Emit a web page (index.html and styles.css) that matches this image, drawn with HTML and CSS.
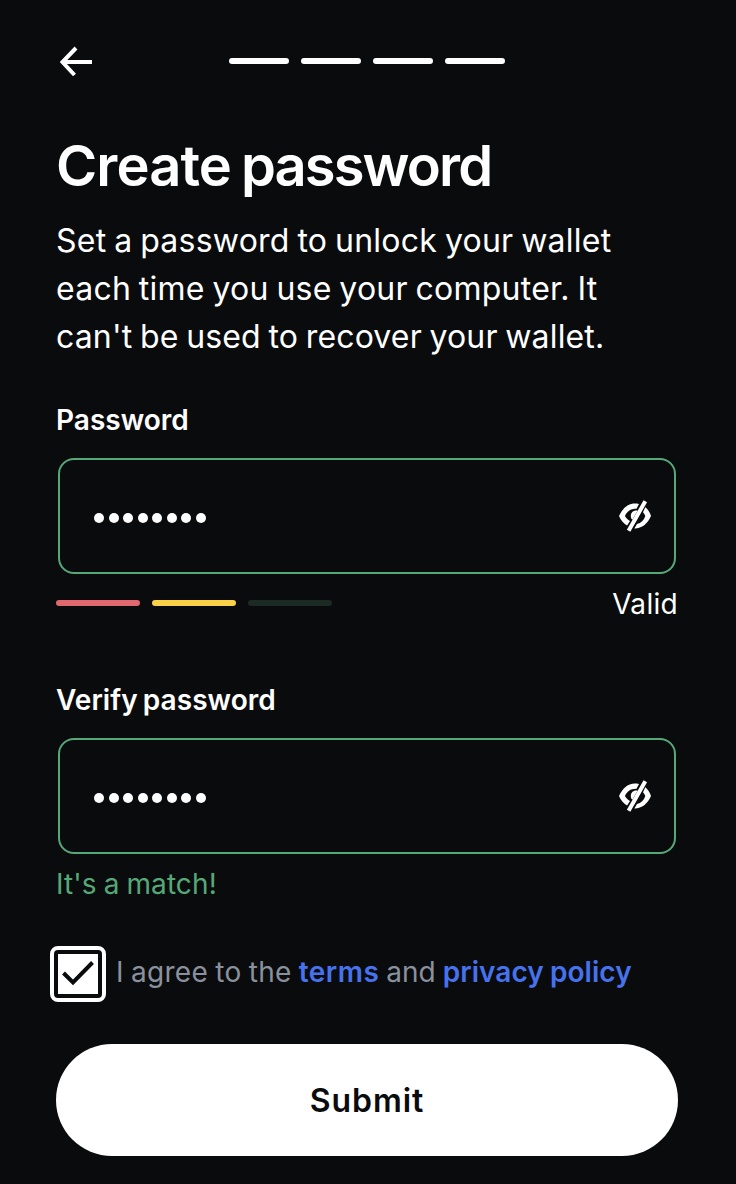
FILE: index.html
```html
<!DOCTYPE html>
<html lang="en">
<head>
<meta charset="utf-8">
<title>Create password</title>
<link rel="stylesheet" href="styles.css">
</head>
<body>
<svg class="defs" width="0" height="0" aria-hidden="true">
  <symbol id="eye-off" viewBox="0 0 34 34">
    <path d="M21 5C11 2.900 5.200 8.500 1 17c1.800 4.200 4.400 7.500 8.100 9.600L12 22C9.700 20.800 8.100 19.200 7 17c2.100-4.500 5.300-7.300 11.500-7.200z" fill="currentColor"/>
    <path d="M19.500 11.700c-4.300-.6-6.700 2.100-6.700 5.200 0 1.500.5 2.900 1.600 3.900z" fill="currentColor"/>
    <path d="M27.300 8.200c2.500 2 4.500 5 5.700 8.800-3.500 8-9.300 12.600-16.600 12.400l2.600-4.500c4.200-.8 6.800-3.500 8.300-7.900-.6-1.500-1.300-2.700-2.300-3.800z" fill="currentColor"/>
    <path d="M27.300 2.200 10.600 31.800" stroke="currentColor" stroke-width="4" fill="none"/>
  </symbol>
</svg>
<main class="page">
  <header class="header">
    <svg class="back" viewBox="0 0 34 32" fill="none" stroke="#fff" stroke-width="4"><path d="M17 2 3.500 16l12 13M4 16h29"/></svg>
    <div class="steps"><i></i><i></i><i></i><i></i></div>
  </header>
  <h1 class="title"><span class="title-a">Create</span> <span class="title-b">password</span></h1>
  <p class="intro"><span class="l1">Set a password to unlock your wallet</span><br><span class="l2">each time you use your computer. It</span><br><span class="l3">can't be used to recover your wallet.</span></p>
  <label class="label label-first">Password</label>
  <div class="field">
    <div class="dots"><i></i><i></i><i></i><i></i><i></i><i></i><i></i><i></i></div>
    <svg class="eye"><use href="#eye-off"/></svg>
  </div>
  <div class="strength">
    <div class="meter"><i class="weak"></i><i class="fair"></i><i class="strong"></i></div>
    <span class="valid">Valid</span>
  </div>
  <label class="label label-verify">Verify password</label>
  <div class="field">
    <div class="dots"><i></i><i></i><i></i><i></i><i></i><i></i><i></i><i></i></div>
    <svg class="eye"><use href="#eye-off"/></svg>
  </div>
  <p class="match">It's a match!</p>
  <div class="agree">
    <span class="checkbox"><svg viewBox="0 0 40 40" fill="none" stroke="#0a0b0d" stroke-width="4"><path d="m5.500 19 9.500 9.500L34.500 8.500"/></svg></span>
    <p class="agree-text"><span class="agree-a">I agree to the</span> <a class="terms">terms</a> <span class="and">and</span> <a class="privacy">privacy policy</a></p>
  </div>
  <button class="submit">Submit</button>
</main>
</body>
</html>
```
FILE: styles.css
```css
* { box-sizing: border-box; }
body { margin: 0; background: #0a0b0d; color: #fff; font-family: Inter, "Liberation Sans", sans-serif; }
.defs { display: block; }
.page { height: 1184px; padding: 44px 58px 28px 56px; display: flex; flex-direction: column; white-space: nowrap; }
.header { display: flex; height: 36px; align-items: center; }
.back { width: 34px; height: 32px; margin-left: 3px; }
.steps { display: flex; gap: 12px; margin: -2px 0 0 136px; }
.steps i { width: 60px; height: 6px; border-radius: 3px; background: #fff; }
.title { display: flex; gap: 10px; margin: 50px 0 0; height: 72px; font-size: 56px; line-height: 72px; font-weight: 640; }
.title-a { letter-spacing: -.9px; }
.title-b { letter-spacing: -1.900px; }
.intro { margin: 15px 0 0; font-size: 32px; line-height: 48px; height: 144px; letter-spacing: .25px; word-spacing: -1.500px; }
.l2 { letter-spacing: .24px; }
.l3 { letter-spacing: .15px; }
.label { font-size: 28px; line-height: 40px; height: 40px; font-weight: 600; }
.label-first { margin-top: 39px; }
.label-verify { margin-top: 60px; letter-spacing: .05px; word-spacing: -2px; }
.field { margin: 18px 2px 0; height: 116px; border: 2px solid #56a878; border-radius: 16px; display: flex; align-items: center; justify-content: space-between; padding: 0 22px 0 34px; }
.dots { display: flex; gap: 4.500px; margin-top: 3px; }
.dots i { width: 10px; height: 10px; border-radius: 50%; background: #fff; }
.eye { width: 34px; height: 34px; }
.strength { display: flex; justify-content: space-between; height: 46px; padding-top: 10px; }
.meter { display: flex; gap: 12px; padding-top: 16px; }
.meter i { width: 84px; height: 6px; border-radius: 3px; }
.weak { background: #e1686f; }
.fair { background: #fad147; }
.strong { background: #1b2b23; }
.valid { font-size: 28px; line-height: 40px; letter-spacing: .3px; }
.match { margin: 10px 0 0; height: 40px; font-size: 28px; line-height: 40px; color: #56a878; letter-spacing: .1px; word-spacing: -1px; }
.agree { display: flex; margin: 42px 0 0 -6px; height: 56px; }
.checkbox { width: 56px; height: 56px; border: 4px solid #fff; border-radius: 8px; padding: 4px; flex: none; }
.checkbox svg { display: block; width: 40px; height: 40px; background: #fff; }
.agree-text { display: flex; gap: 7px; margin: 0 0 0 10px; font-size: 28px; line-height: 52px; color: #8a919e; }
.agree-a { letter-spacing: .3px; word-spacing: -1px; }
.terms { letter-spacing: .5px; }
.and { letter-spacing: 0; }
.privacy { word-spacing: -1px; letter-spacing: .05px; }
.agree-text a { color: #4673ed; font-weight: 600; }
.submit { margin-top: 42px; height: 112px; border: 0; border-radius: 56px; background: #fff; color: #0a0b0d; font: 600 32px/114px Inter, sans-serif; letter-spacing: .9px; padding: 0; }
```
